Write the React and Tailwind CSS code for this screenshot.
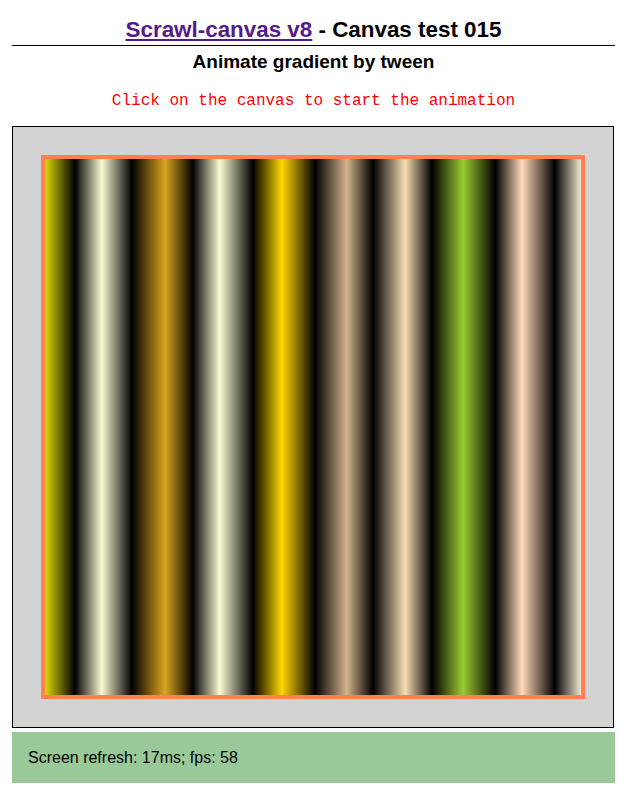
export default function App() {
  return (
    <div className="bg-white min-h-[792px] font-['Liberation_Sans',Arial,sans-serif] text-black">
      <div className="ml-3 w-[603px] flex flex-col">
        <h1 className="mt-[17px] text-center text-[22.4px] font-bold leading-[25px]">
          <a href="#" className="text-[#551a8b] underline">Scrawl-canvas v8</a> - Canvas test 015
        </h1>
        <div className="mt-[3px] h-px bg-black" />
        <h2 className="mt-[5px] text-center text-[19px] font-bold leading-[22px]">Animate gradient by tween</h2>
        <p className="mt-[19px] text-center text-[16px] leading-[18px] text-[#ff0000] font-['Liberation_Mono','Courier_New',monospace]">
          Click on the canvas to start the animation
        </p>
        <div className="mt-[16px] w-[602px] border border-black bg-[#d3d3d3] py-[28px] flex justify-center">
          <div className="w-[544px] h-[544px] border-4 border-[#ff7f50] bg-[linear-gradient(to_right,#dada00_0%,#000_5.6%,#fafad2_10.6%,#000_16.2%,#daa520_22.4%,#000_27.6%,#fafad2_32.6%,#000_38.8%,#ffd700_44.2%,#000_50.4%,#d2b48c_56.3%,#000_61.2%,#f5deb3_67.2%,#000_72.2%,#9acd32_78%,#000_84%,#ffdab9_89%,#000_95.1%,#efe8cf_100%)]" />
        </div>
        <div className="mt-1 h-[51px] bg-[#99c999] flex items-center px-4 text-[16px]">
          Screen refresh: 17ms; fps: 58
        </div>
      </div>
    </div>
  );
}
